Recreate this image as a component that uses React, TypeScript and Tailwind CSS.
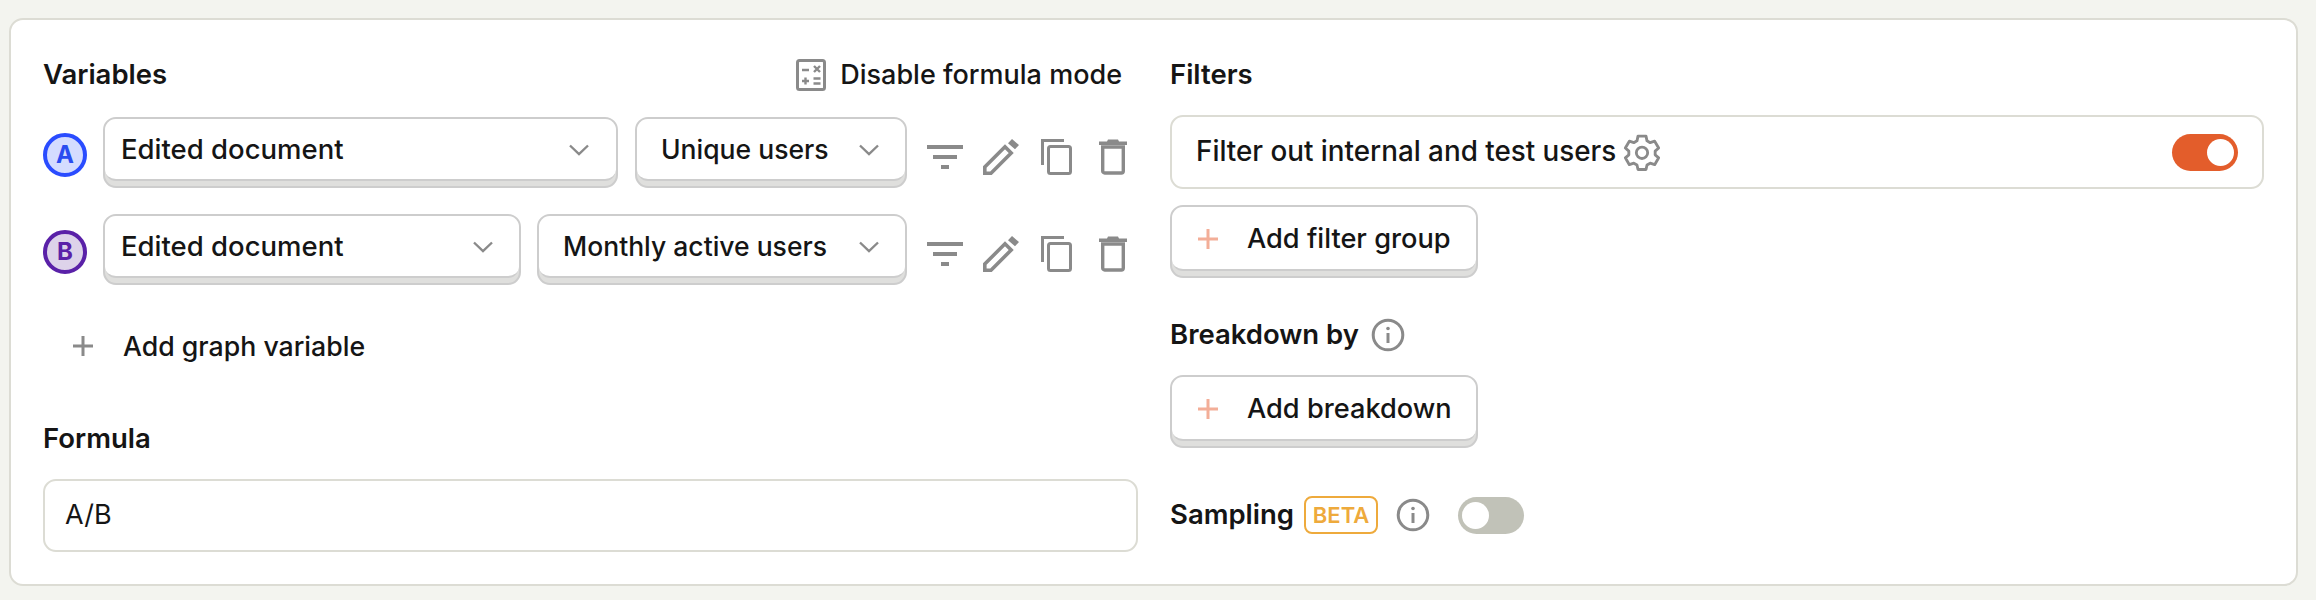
import { ReactNode } from 'react'

const Chevron = () => (
    <svg width="20" height="12" viewBox="0 0 20 12" fill="none" stroke="#8a8a8a" strokeWidth="2.4" className="shrink-0">
        <path d="M1 1.5 L10 10 L19 1.5" />
    </svg>
)

const FilterIcon = () => (
    <svg width="36" height="36" viewBox="0 0 36 36" fill="#8a8a8a">
        <rect x="0" y="6" width="36" height="4" />
        <rect x="6" y="16" width="24" height="4" />
        <rect x="14" y="26" width="8" height="4" />
    </svg>
)

const PencilIcon = () => (
    <svg width="36" height="36" viewBox="0 0 36 36">
        <path d="M1.8 34.2 V28 L22 7.8 L28.2 14 L8 34.2 Z" fill="none" stroke="#8a8a8a" strokeWidth="3.6" />
        <path d="M0 36 V30 L6 36 Z M25 4.3 L29 0 L36 6 L32 10.3 Z" fill="#8a8a8a" />
    </svg>
)

const CopyIcon = () => (
    <svg width="31" height="36" viewBox="0 0 31 36" fill="none" stroke="#8a8a8a" strokeWidth="3">
        <path d="M23 1.5 H1.5 V26" />
        <rect x="7.5" y="7.5" width="22" height="27" rx="2" />
    </svg>
)

const TrashIcon = () => (
    <svg width="28" height="36" viewBox="0 0 28 36">
        <path d="M0 2.5 H8 L9 0.5 H19 L20 2.5 H28 V6 H0 Z" fill="#8a8a8a" />
        <path d="M3.7 8 H24.3 V32 A2 2 0 0 1 22.3 34 H5.7 A2 2 0 0 1 3.7 32 Z" fill="none" stroke="#8a8a8a" strokeWidth="3.4" />
    </svg>
)

const CalcIcon = () => (
    <svg width="30" height="32" viewBox="0 0 30 32" fill="none" stroke="#8a8a8a" strokeWidth="2.4" className="shrink-0">
        <rect x="1.5" y="1.5" width="27" height="29" rx="2" strokeWidth="3" />
        <path d="M6 11 H13 M18 7 L24 13 M24 7 L18 13 M6 22 H13 M9.5 18.5 V25.5 M17.5 19.5 H24.5 M17.5 24.5 H24.5" />
    </svg>
)

const GearIcon = () => (
    <svg width="40" height="40" viewBox="0 0 24 24" fill="none" stroke="#8a8a8a" strokeWidth="1.7" strokeLinejoin="round">
        <path d="M9.6 2.5 H14.4 L15 5.3 L16.9 6.4 L19.6 5.5 L22 9.6 L19.9 11.5 V13.7 L22 15.5 L19.6 19.6 L16.9 18.7 L15 19.8 L14.4 22.5 H9.6 L9 19.8 L7.1 18.7 L4.4 19.6 L2 15.5 L4.1 13.7 V11.5 L2 9.6 L4.4 5.5 L7.1 6.4 L9 5.3 Z" />
        <circle cx="12" cy="12.5" r="3.4" />
    </svg>
)

const InfoIcon = () => (
    <svg width="34" height="34" viewBox="0 0 34 34" fill="none" stroke="#8a8a8a" className="shrink-0">
        <circle cx="17" cy="17" r="14.8" strokeWidth="3" />
        <path d="M17 15 V25" strokeWidth="3" />
        <circle cx="17" cy="10.5" r="1.8" fill="#8a8a8a" stroke="none" />
    </svg>
)

const PlusIcon = ({ color }: { color: string }) => (
    <svg width="20" height="20" viewBox="0 0 20 20" stroke={color} strokeWidth="3" className="shrink-0">
        <path d="M0 10 H20 M10 0 V20" />
    </svg>
)

// raised look: outer grey lip with the white face sitting on it
function Raised({ className, children }: { className: string; children: ReactNode }) {
    return (
        <div className={`h-[71px] shrink-0 rounded-[13px] border-2 border-[#cdcdcd] bg-[#dfdfdd] pb-[5px] ${className}`}>
            <div className="flex h-full items-center rounded-[11px] border-b-2 border-[#cdcdcd] bg-white pt-[2px]">
                {children}
            </div>
        </div>
    )
}

function Toggle({ on }: { on: boolean }) {
    return (
        <div className={`flex h-[37px] w-[66px] shrink-0 items-center rounded-full px-[4px] ${on ? 'justify-end bg-[#e35d2b]' : 'justify-start bg-[#c1c2b8]'}`}>
            <div className="h-[27px] w-[27px] rounded-full bg-white" />
        </div>
    )
}

function VariableRow({ letter, badgeClass, eventWidth, mathClass, math, eventPad, mathPad }: {
    letter: string
    badgeClass: string
    eventWidth: string
    mathClass: string
    math: string
    eventPad: string
    mathPad: string
}) {
    return (
        <div className="flex h-[71px] items-start">
            <div className={`mt-[16px] flex h-[44px] w-[44px] shrink-0 items-center justify-center rounded-full border-[4px] text-[24px] font-bold ${badgeClass}`}>
                {letter}
            </div>
            <Raised className={`ml-[16px] ${eventWidth}`}>
                <span className="ml-[16px] flex-1 text-[27.5px]">Edited document</span>
                <span className={eventPad}><Chevron /></span>
            </Raised>
            <Raised className={mathClass}>
                <span className="ml-[24px] flex-1 text-[26.5px]">{math}</span>
                <span className={mathPad}><Chevron /></span>
            </Raised>
            <div className="ml-[20px] mt-[22px] flex items-center">
                <FilterIcon />
                <span className="ml-[20px]"><PencilIcon /></span>
                <span className="ml-[22px]"><CopyIcon /></span>
                <span className="ml-[27px]"><TrashIcon /></span>
            </div>
        </div>
    )
}

function AddButton({ label }: { label: string }) {
    return (
        <Raised className="h-[73px] w-[308px]">
            <span className="ml-[26px]"><PlusIcon color="#f3ae98" /></span>
            <span className="ml-[29px] text-[27.2px]">{label}</span>
        </Raised>
    )
}

export default function App() {
    return (
        <div className="h-[600px] overflow-hidden bg-[#f3f4ef] pl-[9px] pr-[18px] pt-[18px] font-['Inter',sans-serif] text-[27px] font-medium text-[#151515]">
            <div className="flex h-[568px] gap-[32px] rounded-[14px] border-2 border-[#dcdcd4] bg-white pl-[32px] pr-[32px] pt-[37px]">
                {/* Variables column */}
                <div className="w-[1095px] shrink-0">
                    <div className="flex h-[36px] items-center justify-between pr-[16px]">
                        <span className="text-[27.5px] font-semibold">Variables</span>
                        <div className="flex items-center gap-[14px]">
                            <CalcIcon />
                            <span>Disable formula mode</span>
                        </div>
                    </div>
                    <div className="mt-[24px] flex flex-col gap-[26px]">
                        <VariableRow letter="A" badgeClass="border-[#2a4cff] bg-[#d4dcff] text-[#2a4cf0]" eventWidth="w-[515px]" mathClass="ml-[17px] w-[272px]" math="Unique users" eventPad="mr-[27px]" mathPad="mr-[26px]" />
                        <VariableRow letter="B" badgeClass="border-[#5a21a8] bg-[#ddd3ea] text-[#5a21a8]" eventWidth="w-[418px]" mathClass="ml-[16px] w-[370px]" math="Monthly active users" eventPad="mr-[26px]" mathPad="mr-[26px]" />
                    </div>
                    <div className="ml-[30px] mt-[37px] flex h-[48px] items-center gap-[30px]">
                        <PlusIcon color="#8a8a8a" />
                        <span className="text-[26.7px]">Add graph variable</span>
                    </div>
                    <div className="mt-[51px] flex h-[36px] items-center text-[27.5px] font-semibold">Formula</div>
                    <div className="mt-[22px] flex h-[73px] items-center rounded-[13px] border-2 border-[#dcdcd4] pl-[20px] font-normal">
                        A/B
                    </div>
                </div>

                {/* Filters column */}
                <div className="flex-1">
                    <div className="flex h-[36px] items-center text-[27.5px] font-semibold">Filters</div>
                    <div className="mt-[22px] flex h-[74px] items-center rounded-[13px] border-2 border-[#dcdcd4] pl-[24px] pr-[24px]">
                        <span className="text-[27.8px]">Filter out internal and test users</span>
                        <span className="ml-[6px] flex"><GearIcon /></span>
                        <span className="ml-auto"><Toggle on /></span>
                    </div>
                    <div className="mt-[16px]"><AddButton label="Add filter group" /></div>
                    <div className="mt-[39px] flex h-[36px] items-center gap-[12px]">
                        <span className="text-[27.5px] font-semibold">Breakdown by</span>
                        <InfoIcon />
                    </div>
                    <div className="mt-[22px]"><AddButton label="Add breakdown" /></div>
                    <div className="mt-[47px] flex h-[40px] items-center">
                        <span className="text-[27.5px] font-semibold">Sampling</span>
                        <span className="ml-[10px] flex h-[38px] w-[74px] items-center justify-center rounded-[8px] border-2 border-[#eeaa3c] text-[22px] font-semibold text-[#eeaa3c]">BETA</span>
                        <span className="ml-[18px] flex"><InfoIcon /></span>
                        <span className="ml-[28px]"><Toggle on={false} /></span>
                    </div>
                </div>
            </div>
        </div>
    )
}
